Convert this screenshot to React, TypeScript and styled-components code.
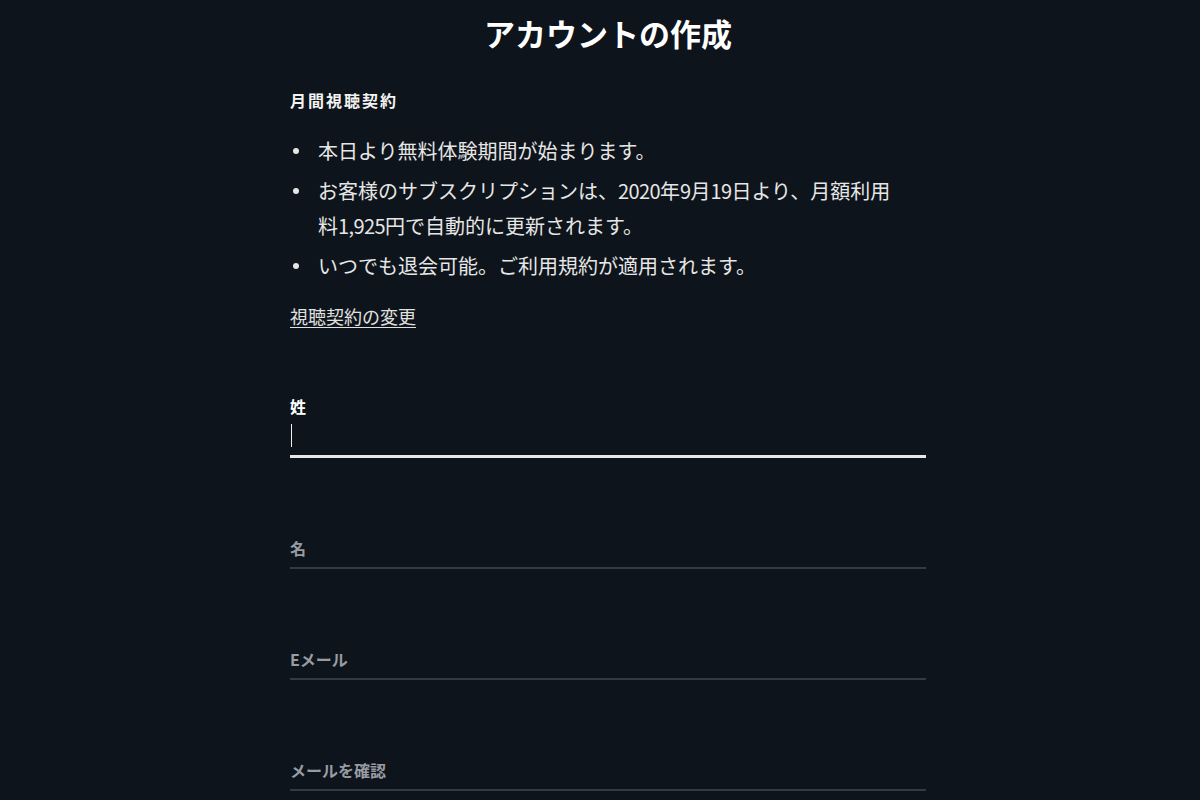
import React, { FC } from 'react';
import styled, { createGlobalStyle } from 'styled-components';

const GlobalStyle = createGlobalStyle`
  html, body {
    margin: 0;
    padding: 0;
    background: #0e141b;
  }
  body {
    font-family: "Noto Sans CJK JP", "Noto Sans", "Liberation Sans", sans-serif;
    color: #e8e8e8;
  }
`;

const Page = styled.div`
  min-height: 100vh;
  box-sizing: border-box;
  padding: 14px 0 40px 16px;
  background: #0e141b;
`;

const Title = styled.h1`
  margin: 0;
  text-align: center;
  font-size: 31px;
  line-height: 37px;
  font-weight: 700;
  color: #ffffff;
`;

const Form = styled.div`
  width: 636px;
  margin: 38px auto 0;
`;

const SectionLabel = styled.div`
  font-size: 16px;
  line-height: 22px;
  font-weight: 700;
  letter-spacing: 2px;
  color: #f2f2f2;
`;

const List = styled.ul`
  list-style: none;
  margin: 22px 0 0;
  padding: 0 0 0 28px;
`;

const Item = styled.li`
  position: relative;
  font-size: 20px;
  line-height: 35px;
  color: #e6e6e6;

  & + & {
    margin-top: 5px;
  }

  &::before {
    content: '';
    position: absolute;
    left: -25px;
    top: 15px;
    width: 6px;
    height: 6px;
    border-radius: 50%;
    background: #e6e6e6;
  }
`;

const Digits = styled.span`
  letter-spacing: -0.6px;
`;

const ChangeLink = styled.a`
  display: inline-block;
  margin-top: 21px;
  font-size: 18px;
  line-height: 24px;
  color: #e0e0e0;
  text-decoration: underline;
  text-underline-offset: 3px;
  cursor: pointer;
`;

interface IFieldStyled {
  active: boolean;
}

const Fields = styled.div`
  display: flex;
  flex-direction: column;
  gap: 52px;
  margin-top: 70px;
`;

const FieldBox = styled.div<IFieldStyled>`
  position: relative;
  display: flex;
  flex-direction: column;
  border-bottom: ${({ active }) => (active ? '3px solid #e8e8e8' : '2px solid #343a42')};
  padding-bottom: ${({ active }) => (active ? '0' : '1px')};
`;

const FieldLabel = styled.label<IFieldStyled>`
  font-size: 16px;
  line-height: 20px;
  font-weight: 700;
  color: ${({ active }) => (active ? '#ffffff' : '#979ca3')};

  ${({ active }) =>
    active
      ? `
    margin: -3px 0 3px;
  `
      : `
    position: absolute;
    left: 0;
    bottom: 9px;
  `}
`;

const InputArea = styled.div<IFieldStyled>`
  display: flex;
  align-items: center;
  height: 36px;
  margin-top: ${({ active }) => (active ? '0' : '20px')};
`;

const Caret = styled.span`
  display: block;
  width: 1px;
  height: 23px;
  margin: 0 0 4px 1px;
  background: #f0f0f0;
`;

interface IField {
  label: string;
  active?: boolean;
}

const Field: FC<IField> = ({ label, active = false }) => (
  <FieldBox active={active}>
    <FieldLabel active={active}>{label}</FieldLabel>
    <InputArea active={active}>{active && <Caret />}</InputArea>
  </FieldBox>
);

const App: FC = () => {
  return (
    <Page>
      <GlobalStyle />
      <Title>アカウントの作成</Title>
      <Form>
        <SectionLabel>月間視聴契約</SectionLabel>
        <List>
          <Item>本日より無料体験期間が始まります。</Item>
          <Item>
            お客様のサブスクリプションは、<Digits>2020</Digits>年<Digits>9</Digits>月<Digits>19</Digits>
            日より、月額利用
            <br />
            料<Digits>1,925</Digits>円で自動的に更新されます。
          </Item>
          <Item>いつでも退会可能。ご利用規約が適用されます。</Item>
        </List>
        <ChangeLink>視聴契約の変更</ChangeLink>
        <Fields>
          <Field label='姓' active />
          <Field label='名' />
          <Field label='Eメール' />
          <Field label='メールを確認' />
        </Fields>
      </Form>
    </Page>
  );
};

export default App;
